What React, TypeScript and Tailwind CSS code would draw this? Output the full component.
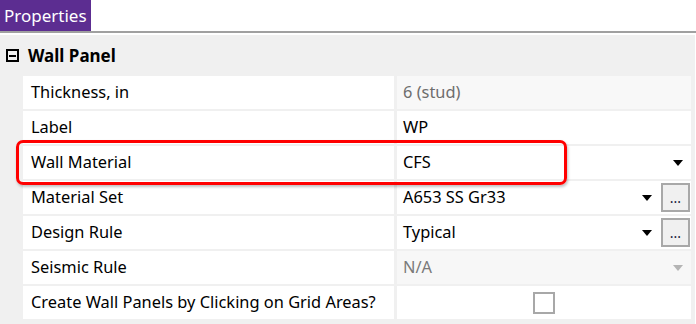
import React from "react";

type Row = {
  label: string;
  value?: string;
  kind: "readonly" | "text" | "select" | "selectButton" | "disabledSelect" | "checkbox";
  highlight?: boolean;
};

const rows: Row[] = [
  { label: "Thickness, in", value: "6 (stud)", kind: "readonly" },
  { label: "Label", value: "WP", kind: "text" },
  { label: "Wall Material", value: "CFS", kind: "select", highlight: true },
  { label: "Material Set", value: "A653 SS Gr33", kind: "selectButton" },
  { label: "Design Rule", value: "Typical", kind: "selectButton" },
  { label: "Seismic Rule", value: "N/A", kind: "disabledSelect" },
  { label: "Create Wall Panels by Clicking on Grid Areas?", kind: "checkbox" },
];

function Arrow({ muted }: { muted?: boolean }) {
  return (
    <svg width="10" height="6" viewBox="0 0 10 6" className="shrink-0">
      <polygon points="0,0 10,0 5,6" fill={muted ? "#b4b4b4" : "#000000"} />
    </svg>
  );
}

function ValueCell({ row }: { row: Row }) {
  if (row.kind === "readonly") {
    return (
      <div className="flex-1 bg-[#f8f8f8] flex items-center pl-[6px] text-[#6d6d6d]">
        {row.value}
      </div>
    );
  }
  if (row.kind === "text") {
    return <div className="flex-1 bg-white flex items-center pl-[6px]">{row.value}</div>;
  }
  if (row.kind === "select") {
    return (
      <div className="flex-1 bg-white flex items-center pl-[6px] pr-[8px]">
        <span className="flex-1">{row.value}</span>
        <Arrow />
      </div>
    );
  }
  if (row.kind === "selectButton") {
    return (
      <div className="flex-1 bg-white flex items-center pl-[6px]">
        <span className="flex-1">{row.value}</span>
        <Arrow />
        <button className="ml-[9px] mr-[1px] w-[29px] h-[29px] bg-[#f0f0f0] border-2 border-[#a8a8a8] flex items-end justify-center pb-[5px] text-[14px] leading-none text-[#1a1a3a]">
          ...
        </button>
      </div>
    );
  }
  if (row.kind === "disabledSelect") {
    return (
      <div className="flex-1 bg-[#f7f7f7] flex items-center pl-[6px] pr-[8px] text-[#7a7a7a]">
        <span className="flex-1">{row.value}</span>
        <Arrow muted />
      </div>
    );
  }
  return (
    <div className="flex-1 bg-white flex items-center justify-center">
      <div className="w-[22px] h-[22px] border-2 border-[#a8a8a8] bg-white" />
    </div>
  );
}

export default function App() {
  return (
    <div
      className="w-[696px] h-[324px] bg-white overflow-hidden flex flex-col text-[16.4px] text-black"
      style={{ fontFamily: '"Noto Sans", "Open Sans", sans-serif' }}
    >
      {/* tab strip */}
      <div className="h-[31px] flex">
        <div className="bg-[#5c2d91] text-white text-[17px] px-[4px] flex items-center">Properties</div>
      </div>
      <div className="h-[2px] bg-[#a0a0a0]" />
      <div className="h-[2px] bg-white" />

      <div className="flex-1 bg-[#f0f0f0] mr-[1px] pr-[4px]">
        {/* category header */}
        <div className="h-[41px] flex items-center pl-[6px] gap-[9px]">
          <div className="w-[13px] h-[13px] border-2 border-black flex items-center justify-center">
            <div className="w-[7px] h-[2px] bg-black" />
          </div>
          <span className="font-bold text-[17px]">Wall Panel</span>
        </div>

        <div className="ml-[23px] flex flex-col gap-[2px]">
          {rows.map((row) => (
            <div key={row.label} className="relative h-[33px] flex gap-[3px]">
              <div className="w-[371px] bg-white flex items-center pl-[8px] whitespace-nowrap">
                {row.label}
              </div>
              <ValueCell row={row} />
              {row.highlight && (
                <div className="absolute z-10 left-[-7px] top-[-6px] w-[551px] h-[45px] border-[3px] border-[#ff0000] rounded-[7px] shadow-[1px_2px_3px_rgba(0,0,0,0.25)] pointer-events-none" />
              )}
            </div>
          ))}
        </div>
      </div>
    </div>
  );
}
